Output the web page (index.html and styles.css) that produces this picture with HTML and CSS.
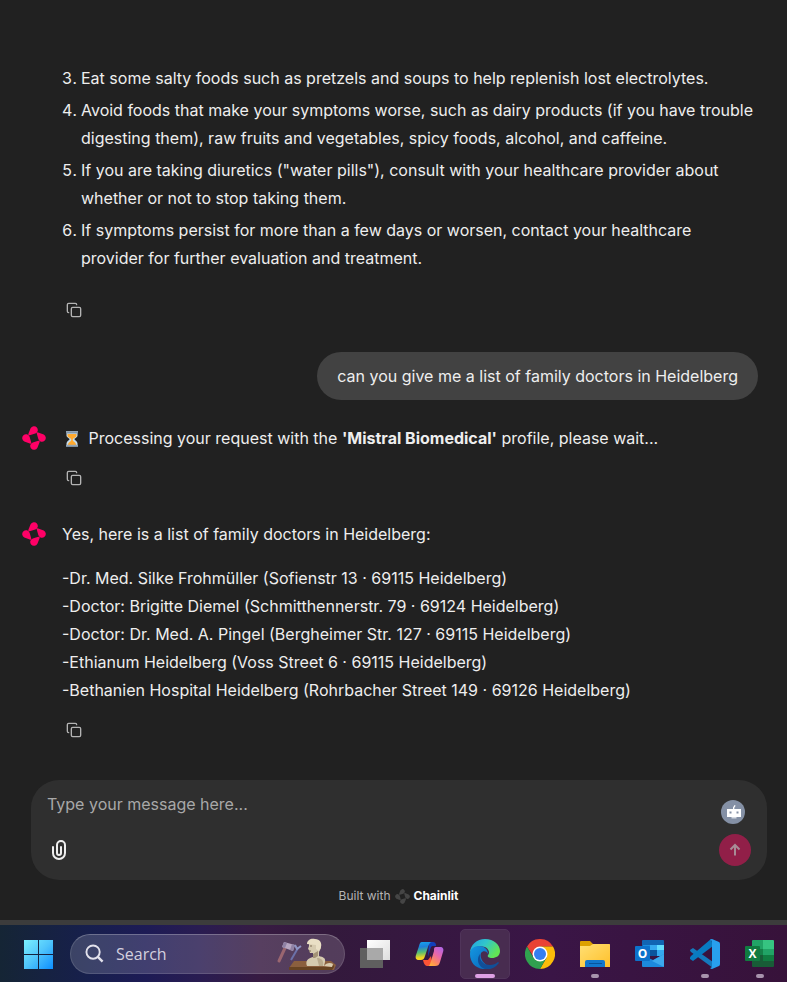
FILE: index.html
```html
<!DOCTYPE html>
<html lang="en">
<head>
<meta charset="utf-8">
<meta name="viewport" content="width=device-width, initial-scale=1">
<title>Assistant</title>
<link rel="stylesheet" href="styles.css">
</head>
<body>
<svg width="0" height="0" class="defs" aria-hidden="true">
  <symbol id="copy" viewBox="0 0 24 24"><g fill="none" stroke="currentColor" stroke-width="2" stroke-linecap="round" stroke-linejoin="round"><rect x="8" y="8" width="14" height="14" rx="2"/><path d="M4 16c-1.100 0-2-.9-2-2V4c0-1.100.9-2 2-2h10c1.100 0 2 .9 2 2"/></g></symbol>
  <symbol id="logo" viewBox="0 0 24 24"><g fill="currentColor"><path id="petal" d="M6.400 7.800 8.600 2.300A3.800 3.800 0 1 1 13.200 7.600L7.700 9.200Q6 9.500 6.400 7.800Z"/><use href="#petal" transform="rotate(90 12 12)"/><use href="#petal" transform="rotate(180 12 12)"/><use href="#petal" transform="rotate(270 12 12)"/></g></symbol>
</svg>

<main class="thread">
  <article class="message">
    <div class="body">
      <ol class="steps" start="3">
        <li>Eat some salty foods such as pretzels and soups to help replenish lost electrolytes.</li>
        <li>Avoid foods that make your symptoms worse, such as dairy products (if you have trouble digesting them), raw fruits and vegetables, spicy foods, alcohol, and caffeine.</li>
        <li>If you are taking diuretics ("water pills"), consult with your healthcare provider about whether or not to stop taking them.</li>
        <li>If symptoms persist for more than a few days or worsen, contact your healthcare provider for further evaluation and treatment.</li>
      </ol>
      <button class="copy copy-far" aria-label="Copy"><svg><use href="#copy"/></svg></button>
    </div>
  </article>

  <p class="bubble">can you give me a list of family doctors in Heidelberg</p>

  <article class="message">
    <svg class="avatar" aria-hidden="true"><use href="#logo"/></svg>
    <div class="body">
      <p><svg class="hourglass" viewBox="0 0 22 18" role="img" aria-label="hourglass"><path fill="#c5dcec" d="M4.500 3h11v2.500c0 2-3 2.800-3 3.700s3 2 3 4V15h-11v-1.800c0-2 3-3.100 3-4s-3-1.700-3-3.700Z"/><path fill="#ffa92e" d="M5.500 4h9v1.500c0 1.800-3 2.500-3.700 3.500v1.500c1 1.500 3 1.800 3.400 4.500H5.800c.4-2.700 2.400-3 3.400-4.500V9C8.500 8 5.500 7.300 5.500 5.500Z"/><path fill="#94a5b5" d="M4 1h12v2.200H4zM4 14.800h12V17H4z"/><path fill="#75889a" d="M4 2.500h12v.7H4zM4 16.300h12v.7H4z"/></svg> Processing your request with the <strong>'Mistral Biomedical'</strong> profile, please wait...</p>
      <button class="copy" aria-label="Copy"><svg><use href="#copy"/></svg></button>
    </div>
  </article>

  <article class="message">
    <svg class="avatar" aria-hidden="true"><use href="#logo"/></svg>
    <div class="body">
      <p>Yes, here is a list of family doctors in Heidelberg:</p>
      <p class="doctors">-Dr. Med. Silke Frohmüller (Sofienstr 13 · 69115 Heidelberg)<br>
      -Doctor: Brigitte Diemel (Schmitthennerstr. 79 · 69124 Heidelberg)<br>
      -Doctor: Dr. Med. A. Pingel (Bergheimer Str. 127 · 69115 Heidelberg)<br>
      -Ethianum Heidelberg (Voss Street 6 · 69115 Heidelberg)<br>
      -Bethanien Hospital Heidelberg (Rohrbacher Street 149 · 69126 Heidelberg)</p>
      <button class="copy" aria-label="Copy"><svg><use href="#copy"/></svg></button>
    </div>
  </article>
</main>

<form class="composer">
  <div class="entry">
    <textarea rows="1" aria-label="Message" placeholder="Type your message here..."></textarea>
    <button type="button" class="attach" aria-label="Attach files"><svg viewBox="0 0 14 20" fill="none" stroke="currentColor" stroke-width="2" stroke-linecap="round"><path d="M1 7v6a6 6 0 0 0 12 0V5a4 4 0 0 0-8 0v8a2 2 0 0 0 4 0V7"/></svg></button>
  </div>
  <div class="actions">
    <button type="button" class="profile" aria-label="Chat profile"><svg viewBox="0 0 24 24"><path fill="#fff" d="M6 9h6V7.500L13.500 5l1.200.8-1.400 2V9H20v8H6Z"/><path fill="#d5dae2" d="M10.500 17h5v1.500h-5z"/><path fill="#8490a5" d="M8.500 11.500h2v2h-2zM15.500 11.500h2v2h-2z"/></svg></button>
    <button type="button" class="send" aria-label="Send message"><svg viewBox="0 0 12 14" fill="none" stroke="currentColor" stroke-width="2"><path d="M6 12.500V2M1.500 6.500 6 2l4.500 4.500"/></svg></button>
  </div>
</form>

<a class="credit" href="#">Built with <svg aria-hidden="true"><use href="#logo"/></svg> <b>Chainlit</b></a>

<nav class="taskbar" aria-label="Taskbar">
  <button class="tile start" aria-label="Start"><svg viewBox="0 0 30 30"><defs><linearGradient id="win" gradientUnits="userSpaceOnUse" x1="0" y1="0" x2="30" y2="30"><stop stop-color="#7df2ff"/><stop offset=".5" stop-color="#4fc4fb"/><stop offset="1" stop-color="#0a8dff"/></linearGradient></defs><path fill="url(#win)" d="M0 1h14v14H0zM15 1h14v14H15zM0 16h14v14H0zM15 16h14v14H15z"/></svg></button>
  <label class="search">
    <svg class="lens" viewBox="0 0 20 20" fill="none" stroke="currentColor"><circle cx="8.500" cy="8.500" r="7" stroke-width="2"/><path d="m13.500 13.500 5 5" stroke-width="2.500"/></svg>
    <input type="text" placeholder="Search" aria-label="Search">
    <svg class="art" viewBox="0 0 60 32"><path d="m12 30 5-7h37l5 4-2 5H12Z" fill="#8b5f3e"/><path d="M12 29h42l3-2v2l-2 3H12Z" fill="#674322"/><path d="m2 23 6-13" stroke="#9a6670" stroke-width="3" stroke-linecap="round"/><path d="m7 4 11 3-2 6L5 9Z" fill="#b6a6c1"/><path d="m7 4 3 1-2 5-3-1ZM15 6l3 1-2 6-3-1Z" fill="#8f81a4"/><path d="m14 22 7-12" stroke="#6b71a9" stroke-width="2"/><path d="m18 7 2 4 4-3" stroke="#8f95c4" stroke-width="2" fill="none"/><path d="M30 28c-2-5 1-8 6-9v-4h-3l-1-3-1-1 1-3V5h11l1 5-2 4v4c4 1 7 2 6 6l-1 4Z" fill="#d6cbb0"/><path d="M30 6c0-4 4-6 8-5 5 0 7 4 6 8l-2 4-3-2V7Z" fill="#e9dfc5"/><path d="m36 16 5-3v5l-3 2h-2Z" fill="#a39276"/><path d="M40 20c4 0 7 2 6 8h-4Z" fill="#b9aa8d"/><path d="M47 28c2-3 6-4 9-2l-1 3Z" fill="#d8caae"/><path d="M33 8h2M32 13h2" stroke="#806e57"/></svg>
  </label>
  <button class="tile" aria-label="Task view"><svg viewBox="0 0 30 30"><defs><linearGradient id="tvw" x2="1" y2="1"><stop stop-color="#fff"/><stop offset="1" stop-color="#dedede"/></linearGradient></defs><path fill="url(#tvw)" d="M7 1h23v20H7z"/><path fill="#5f5f5f" d="M0 9h23v20H0z"/><path fill="#a9a9a9" d="M7 9h16v12H7z"/></svg></button>
  <button class="tile" aria-label="Copilot"><svg viewBox="0 0 30 30"><defs><linearGradient id="cpa" x2=".1" y2="1"><stop stop-color="#17a5ee"/><stop offset=".3" stop-color="#1d80db"/><stop offset=".6" stop-color="#56bd72"/><stop offset=".9" stop-color="#f4d422"/></linearGradient><linearGradient id="cpb" x1="1" x2=".3" y2="1"><stop stop-color="#a965f0"/><stop offset=".45" stop-color="#e866aa"/><stop offset=".8" stop-color="#ff8c59"/><stop offset="1" stop-color="#ffb03d"/></linearGradient></defs><path fill="#123fbb" d="M14 3h4c2 0 3 1 3 4h-3c-2 0-2 1-3 4l-2 7Z"/><path fill="#fb5335" d="M8 21h5l3-4 1 6c-1 3-2 4-4 4-3 0-4-2-5-6Z"/><path fill="url(#cpa)" d="M7 3h10c-2 0-3 2-4 5l-3 9c-1 3-2 4-4 4H4c-3 0-4-2-3-5l3-9c1-3 1-4 3-4Z"/><path fill="url(#cpb)" d="M21 8h4c3 0 4 2 3 5l-3 10c-1 3-2 4-5 4h-8c3 0 3-2 4-5l3-10c0-3 0-4 2-4Z"/></svg></button>
  <button class="tile active" aria-label="Edge"><svg viewBox="0 0 30 30"><defs><linearGradient id="ea" x2="1" y2=".5"><stop stop-color="#229fe4"/><stop offset=".5" stop-color="#31c6cb"/><stop offset="1" stop-color="#62e454"/></linearGradient><linearGradient id="eb" x2="1" y2="1"><stop stop-color="#1598e1"/><stop offset="1" stop-color="#0863b9"/></linearGradient></defs><path fill="url(#ea)" d="M0 14C0 6 7 0 15 0c9 0 15 6 15 12 0 5-4 7-8 7-3 0-5-1-4-3 2-2 1-6-3-8C9 6 2 8 0 14Z"/><path fill="url(#eb)" d="M0 15C0 10 4 7 9 7c5 0 9 3 9 8-1-3-5-4-7-1-2 5 3 12 10 14-3 2-6 2-8 2C5 29 0 23 0 15Z"/><path fill="#114f98" d="M10 15c-1 7 4 11 10 11 3 0 6-1 8-3 1 0 1 1 0 2-3 4-8 6-13 5C8 28 6 20 10 15Z"/></svg></button>
  <button class="tile" aria-label="Chrome"><svg viewBox="0 0 30 30"><path fill="#e94235" d="M2 7.500A15 15 0 0 1 28 7.500H15L9 18.500Z"/><path fill="#fbbc0a" d="M28 7.500A15 15 0 0 1 15 30l6.500-11.200L21 11l-6-3.500Z"/><path fill="#30a04f" d="M2 7.500A15 15 0 0 0 15 30l6.500-11.200L15 22l-6.500-3.200Z"/><circle cx="15" cy="15" r="7.500" fill="#fff"/><circle cx="15" cy="15" r="6" fill="#347ef0"/></svg></button>
  <button class="tile open" aria-label="File Explorer"><svg viewBox="0 0 30 30"><defs><linearGradient id="fo" x2="1" y2="1"><stop stop-color="#ffdf74"/><stop offset="1" stop-color="#ffc02a"/></linearGradient></defs><path fill="#dda000" d="M0 3q0-1 1-1h9l3 3h16q1 0 1 1v5H0Z"/><path fill="url(#fo)" d="M0 7h10l3-2h16q1 0 1 1v22H0Z"/><path fill="#1277cd" d="M5 28v-5q0-2 2-2h16q2 0 2 2v5Z"/><path d="M9 24.500h13" stroke="#07549c"/></svg></button>
  <button class="tile" aria-label="Outlook"><svg viewBox="0 0 30 30"><path fill="#1165b3" d="M7 2q0-1 1-1h20q1 0 1 1v14H7Z"/><path fill="#1b8bdc" d="M8 6h7v5H8z"/><path fill="#35aaf0" d="M15 6h7v5h-7zM22 11h7v6h-7z"/><path fill="#63ddff" d="M22 6h7v5h-7z"/><path fill="#0b549c" d="M15 11h7v6h-7z"/><path fill="#1c8add" d="m7 16 11 5 11-6v12q0 1-1 1H8q-1 0-1-1Z"/><path fill="#3ca9ed" d="m29 15-12 7 12 6Z"/><rect y="7" width="15" height="15" rx="1" fill="#0c72cb"/><text x="7.500" y="18.500" text-anchor="middle">O</text></svg></button>
  <button class="tile open" aria-label="Visual Studio Code"><svg viewBox="0 0 30 30"><path fill="#1479bd" d="m0 11 3-2 20 14v6L1 13Q0 12 0 11Z"/><path fill="#087bc2" d="M0 19q0-1 1-2L21 0l2 7L3 22 0 20Z"/><path fill="#28a0ee" d="m22 0 7 3q1 .5 1 2v20q0 1.500-1 2l-7 3q-1 0-2-1 2 0 2-2V3q0-2-2-2 1-1 2-1Z"/></svg></button>
  <button class="tile open" aria-label="Excel"><svg viewBox="0 0 30 30"><path fill="#21a366" d="M7 2q0-1 1-1h10v9H7Z"/><path fill="#36c481" d="M18 1h10q1 0 1 1v8H18Z"/><path fill="#158048" d="M7 10h11v6H7z"/><path fill="#21a366" d="M18 10h11v6H18z"/><path fill="#185c37" d="M7 16h11v6H7zM7 22h22v5q0 1-1 1H8q-1 0-1-1Z"/><path fill="#107c41" d="M18 16h11v6H18z"/><rect y="7" width="15" height="15" rx="1" fill="#107b40"/><text x="7.500" y="18.500" text-anchor="middle">X</text></svg></button>
</nav>
</body>
</html>
```
FILE: styles.css
```css
* { box-sizing: border-box; }
body {
  margin: 0;
  min-height: 100vh;
  display: flex;
  flex-direction: column;
  background: #212121;
  color: #eeeeee;
  font: 16px/28px Inter, "Liberation Sans", sans-serif;
}
p, ol { margin: 0; }
button {
  border: 0;
  padding: 0;
  background: none;
  color: inherit;
  display: flex;
  align-items: center;
  justify-content: center;
  flex: none;
}
.defs { position: absolute; }

.thread {
  flex: 1;
  display: flex;
  flex-direction: column;
  padding: 64px 29px 0 22px;
}
.message { display: flex; gap: 16px; }
.body { flex: 1; min-width: 0; }
.message:first-child { padding-left: 40px; }
.avatar {
  width: 24px;
  height: 24px;
  margin-top: 2px;
  flex: none;
  color: #ff0066;
}
.steps { padding-left: 19px; }
.steps li + li { margin-top: 4px; }
.copy {
  width: 24px;
  height: 24px;
  margin-top: 14px;
  color: #b4b4b4;
}
.copy svg { width: 16px; height: 16px; }
.copy-far { margin-top: 26px; }
.bubble {
  align-self: flex-end;
  margin: 30px 0 24px;
  padding: 10px 20px;
  border-radius: 24px;
  background: #424242;
}
.hourglass {
  width: 22px;
  height: 18px;
  vertical-align: -4px;
}
.message + .message { margin-top: 30px; }
.doctors { margin-top: 16px; }

.composer {
  display: flex;
  justify-content: space-between;
  margin: 0 20px 0 31px;
  padding: 10px 16px 14px;
  min-height: 100px;
  border-radius: 28px;
  background: #2f2f2f;
}
.entry {
  flex: 1;
  display: flex;
  flex-direction: column;
  justify-content: space-between;
}
.entry textarea {
  width: 100%;
  height: 28px;
  border: 0;
  padding: 0;
  resize: none;
  overflow: hidden;
  outline: 0;
  background: none;
  color: inherit;
  font: inherit;
}
textarea::placeholder { color: #a8a8a8; opacity: 1; }
.attach { width: 24px; height: 32px; }
.attach svg { width: 14px; height: 20px; }
.actions {
  display: flex;
  flex-direction: column;
  align-items: center;
  justify-content: space-between;
  padding-top: 10px;
}
.profile {
  width: 24px;
  height: 24px;
  margin-right: 4px;
  border-radius: 50%;
  background: #8490a5;
}
.profile svg { width: 24px; height: 24px; }
.send {
  width: 32px;
  height: 32px;
  border-radius: 50%;
  background: #911f48;
  color: #a88c96;
}
.send svg { width: 12px; height: 14px; }
.credit {
  display: flex;
  align-items: center;
  justify-content: center;
  gap: 4px;
  height: 40px;
  padding: 4px 0 12px 10px;
  color: #b4b4b4;
  font-size: 12px;
  line-height: 24px;
  text-decoration: none;
}
.credit svg { width: 15px; height: 15px; color: #454545; }
.credit b { color: #ffffff; }

.taskbar {
  display: flex;
  align-items: center;
  gap: 5px;
  height: 62px;
  padding: 0 2px 0 14px;
  border-top: 5px solid #3c3c3c;
  background: linear-gradient(90deg, #152535, #171f4d 90px, #1d1b55 145px, #291c51 200px, #371b42 260px, #33193c 330px, #3a1546 550px, #37123a);
}
.tile {
  position: relative;
  width: 50px;
  height: 50px;
  border-radius: 5px;
}
.start { margin-right: 1px; }
.tile svg { width: 30px; height: 30px; }
.tile text { fill: #ffffff; font: bold 12px "Open Sans", sans-serif; }
.active { background: #482c50; border: 1px solid #50345a; }
.active::after, .open::after {
  content: "";
  position: absolute;
  bottom: 1px;
  width: 8px;
  height: 4px;
  border-radius: 2px;
  background: #a893ad;
}
.active::after { width: 20px; bottom: 0; background: #dda0e4; }
.search {
  flex: 0 1 275px;
  min-width: 0;
  height: 40px;
  display: flex;
  align-items: center;
  gap: 12px;
  padding: 0 7px 0 14px;
  border: 1px solid rgba(255, 255, 255, 0.12);
  border-top-color: rgba(255, 255, 255, 0.25);
  border-radius: 20px;
  background: rgba(255, 255, 255, 0.16);
  color: #e3e2ec;
}
.lens { width: 19px; height: 19px; flex: none; }
.search input {
  flex: 1;
  min-width: 0;
  border: 0;
  padding: 0;
  outline: 0;
  background: none;
  color: inherit;
  font: 16px/24px "Open Sans", sans-serif;
}
.search input::placeholder { color: #d3d0df; opacity: 1; }
.art { width: 60px; height: 32px; flex: none; }
```
